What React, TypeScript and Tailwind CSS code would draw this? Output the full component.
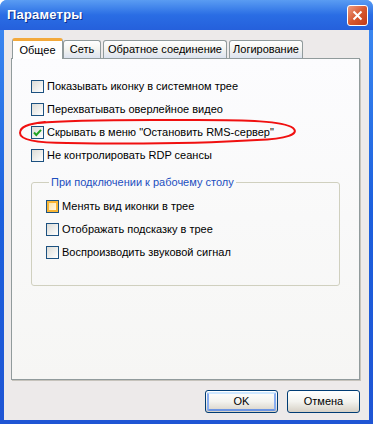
import React from "react";

const font = { fontFamily: '"Liberation Sans", Arial, sans-serif' };

function Checkbox({ checked = false, hover = false }: { checked?: boolean; hover?: boolean }) {
  return (
    <span className="relative w-[13px] h-[13px] shrink-0 border border-[#1C5180] bg-gradient-to-br from-[#DCDCD7] to-white flex items-center justify-center">
      {hover && <span className="absolute inset-0 border-2 border-[#F8B636] bg-gradient-to-br from-[#FCE4A8] to-[#FEF6E4]" />}
      {checked && (
        <svg width="9" height="9" viewBox="0 0 9 9" className="relative">
          <path d="M1 4.5 L3.3 7 L8 1.8" stroke="#21A121" strokeWidth="2" fill="none" />
        </svg>
      )}
    </span>
  );
}

function Row({ label, checked, hover }: { label: string; checked?: boolean; hover?: boolean }) {
  return (
    <div className="flex items-center gap-[3px] h-[13px] text-[11px] text-black leading-none whitespace-nowrap">
      <Checkbox checked={checked} hover={hover} />
      <span>{label}</span>
    </div>
  );
}

function Tab({ label, width, active = false }: { label: string; width: string; active?: boolean }) {
  if (active) {
    return (
      <div
        className={`${width} h-[21px] -mb-px relative z-10 rounded-t-[3px] border-x border-[#919B9C] border-t-[3px] border-t-[#F3A93B] bg-white flex items-center justify-center text-[11px] leading-none whitespace-nowrap`}
      >
        {label}
      </div>
    );
  }
  return (
    <div
      className={`${width} h-[18px] rounded-t-[3px] border border-b-0 border-[#919B9C] bg-gradient-to-b from-white via-[#F3F3EF] to-[#DCE3F0] flex items-center justify-center text-[11px] leading-none whitespace-nowrap`}
    >
      {label}
    </div>
  );
}

function Button({ label, isDefault = false }: { label: string; isDefault?: boolean }) {
  return (
    <div className="w-[73px] h-[23px] rounded-[3px] border border-[#003C74] bg-gradient-to-b from-white via-[#F3F3EF] to-[#D6D0C5] p-px">
      <div
        className={`w-full h-full rounded-[2px] flex items-center justify-center text-[11px] leading-none ${
          isDefault ? "border-2 border-[#8AAEF0] border-t-[#CEE7FF] border-b-[#6C95E4]" : ""
        }`}
      >
        {label}
      </div>
    </div>
  );
}

export default function App() {
  return (
    <div
      className="w-[373px] h-[424px] flex flex-col rounded-t-[7px] bg-gradient-to-b from-[#3F8CF3] via-[#1C5FDD] to-[#1F55D4] overflow-hidden"
      style={font}
    >
      {/* Title bar */}
      <div className="h-[30px] shrink-0 flex items-center justify-between pl-[7px] pr-[5px] bg-gradient-to-b from-[#5A9CF2] via-[#2A6DE4] to-[#2560DC]">
        <span
          className="text-white text-[13px] font-bold tracking-[0.2px]"
          style={{ textShadow: "1px 1px 0 #0A2F8C" }}
        >
          Параметры
        </span>
        <div className="w-[21px] h-[21px] rounded-[3px] border border-white bg-gradient-to-br from-[#EB9A7E] via-[#D7582F] to-[#C23A17] flex items-center justify-center">
          <svg width="11" height="11" viewBox="0 0 11 11">
            <path d="M1.5 1.5 L9.5 9.5 M9.5 1.5 L1.5 9.5" stroke="white" strokeWidth="2" />
          </svg>
        </div>
      </div>

      {/* Body */}
      <div className="flex-1 mx-[4px] mb-[4px] bg-[#EDEAEA] flex flex-col pt-[7px] pl-[7px] pr-[9px]">
        {/* Tabs */}
        <div className="flex items-end pl-px h-[21px]">
          <Tab label="Общее" width="w-[51px]" active />
          <Tab label="Сеть" width="w-[38px]" />
          <div className="w-[2px]" />
          <Tab label="Обратное соединение" width="w-[124px]" />
          <div className="w-[2px]" />
          <Tab label="Логирование" width="w-[74px]" />
        </div>

        {/* Panel */}
        <div className="relative h-[322px] border border-[#919B9C] bg-gradient-to-b from-[#FCFCFE] to-[#F6F6F4] shadow-[1px_1px_0_#C6C3BC] pt-[21px] pl-[19px]">
          <div className="flex flex-col gap-[10px]">
            <Row label="Показывать иконку в системном трее" />
            <Row label="Перехватывать оверлейное видео" />
            <Row label='Скрывать в меню "Остановить RMS-сервер"' checked />
            <Row label="Не контролировать RDP сеансы" />
          </div>

          <fieldset className="mt-[15px] w-[309px] h-[109px] border border-[#D0D0BF] rounded-[3px] px-[14px] pt-[12px]">
            <legend className="ml-[3px] px-[2px] text-[11px] leading-none text-[#1D4FBF]">
              При подключении к рабочему столу
            </legend>
            <div className="flex flex-col gap-[10px]">
              <Row label="Менять вид иконки в трее" hover />
              <Row label="Отображать подсказку в трее" />
              <Row label="Воспроизводить звуковой сигнал" />
            </div>
          </fieldset>

          {/* Hand-drawn red highlight */}
          <svg
            className="absolute left-[5px] top-[58px] pointer-events-none"
            width="282"
            height="30"
            viewBox="0 0 282 30"
          >
            <path
              d="M22 6 C60 2 120 3 180 3 C230 3 266 4 276 11 C283 17 270 22 240 23 C190 26 110 27 50 26 C20 26 3 23 3 16 C3 10 10 7 28 5"
              stroke="#F01010"
              strokeWidth="2"
              fill="none"
              strokeLinecap="round"
            />
          </svg>
        </div>

        {/* Buttons */}
        <div className="flex justify-end gap-[9px] mt-[10px]">
          <Button label="OK" isDefault />
          <Button label="Отмена" />
        </div>
      </div>
    </div>
  );
}
